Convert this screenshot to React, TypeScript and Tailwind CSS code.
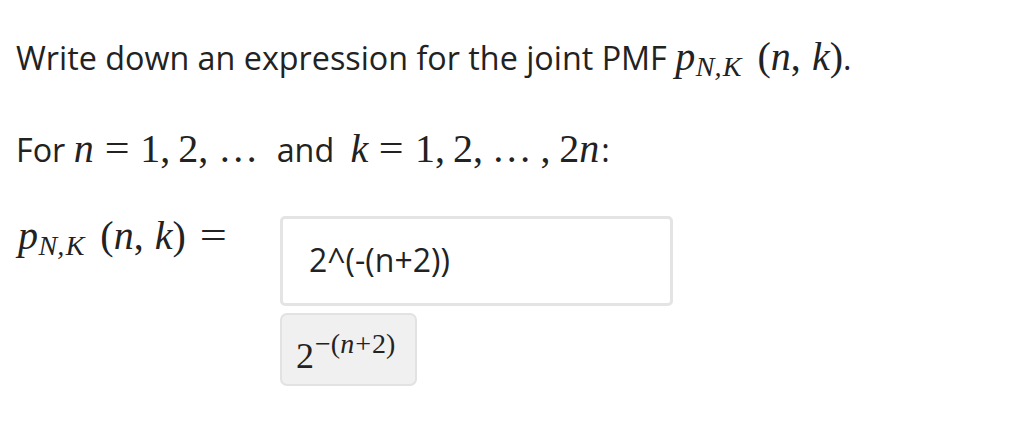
import React from "react";

const M = ({ children, className = "" }: { children: React.ReactNode; className?: string }) => (
  <span className={`font-['Liberation_Serif'] whitespace-nowrap leading-none ${className}`}>{children}</span>
);

const V = ({ children, className = "" }: { children: React.ReactNode; className?: string }) => (
  <i className={`italic ${className}`}>{children}</i>
);

const Sub = ({ children }: { children: React.ReactNode }) => (
  <span className="text-[0.7em] relative top-[0.22em] italic ml-[0.02em]">{children}</span>
);

const PNK = () => (
  <>
    <V>p</V>
    <Sub>
      N,<span className="ml-[0.05em]"></span>K
    </Sub>
    <span className="ml-[0.4em]">(</span>
    <V>n</V>,<span className="ml-[0.28em]"></span>
    <V>k</V>)
  </>
);

const Eq = () => <span className="mx-[0.3em] inline-block scale-x-[1.1]">=</span>;

export default function App() {
  return (
    <div className="bg-white w-[1030px] h-[422px] overflow-hidden pl-4 pt-[35px] font-['Open_Sans'] text-[#222]">
      <p className="text-[32.3px] leading-[44px]">
        Write down an expression for the joint PMF{" "}
        <M className="text-[40px]">
          <PNK />
        </M>
        .
      </p>
      <p className="mt-[48px] text-[32.3px] leading-[44px]">
        For{" "}
        <M className="text-[40px]">
          <V>n</V>
          <Eq />1,<span className="ml-[0.2em]"></span>2,
          <span className="ml-[0.25em]"></span>…
        </M>
        {"  "}
        <span className="ml-[10px]">and</span>{" "}
        <M className="text-[40px] ml-[8px]">
          <V>k</V>
          <Eq />1,<span className="ml-[0.2em]"></span>2,
          <span className="ml-[0.22em]"></span>…<span className="ml-[0.22em]"></span>,
          <span className="ml-[0.22em]"></span>2<V>n</V>
        </M>
        <span className="ml-[2px]">:</span>
      </p>
      <div className="mt-[45px] flex items-start">
        <div className="w-[264px] leading-[40px] pl-[2px]">
          <M className="text-[40px]">
            <PNK />
            <span className="ml-[0.4em] inline-block scale-x-[1.2]">=</span>
          </M>
        </div>
        <div className="flex flex-col gap-[7px]">
          <div className="w-[393px] h-[90px] border-[3px] border-[#e4e4e4] rounded-[5px] bg-white flex items-center pl-[26px] pb-[2px] text-[32px] text-[#222]">
            2^(-(n+2))
          </div>
          <div className="w-[137px] h-[73px] bg-[#f0f0f0] border-2 border-[#e2e2e2] rounded-[7px] pl-[14px] pt-[23px]">
            <M className="text-[36px] leading-[40px]">
              2
              <span className="text-[28px] relative -top-[15px] ml-[1px]">
                −(<V>n</V>
                <span className="mx-[1px]">+</span>2)
              </span>
            </M>
          </div>
        </div>
      </div>
    </div>
  );
}
